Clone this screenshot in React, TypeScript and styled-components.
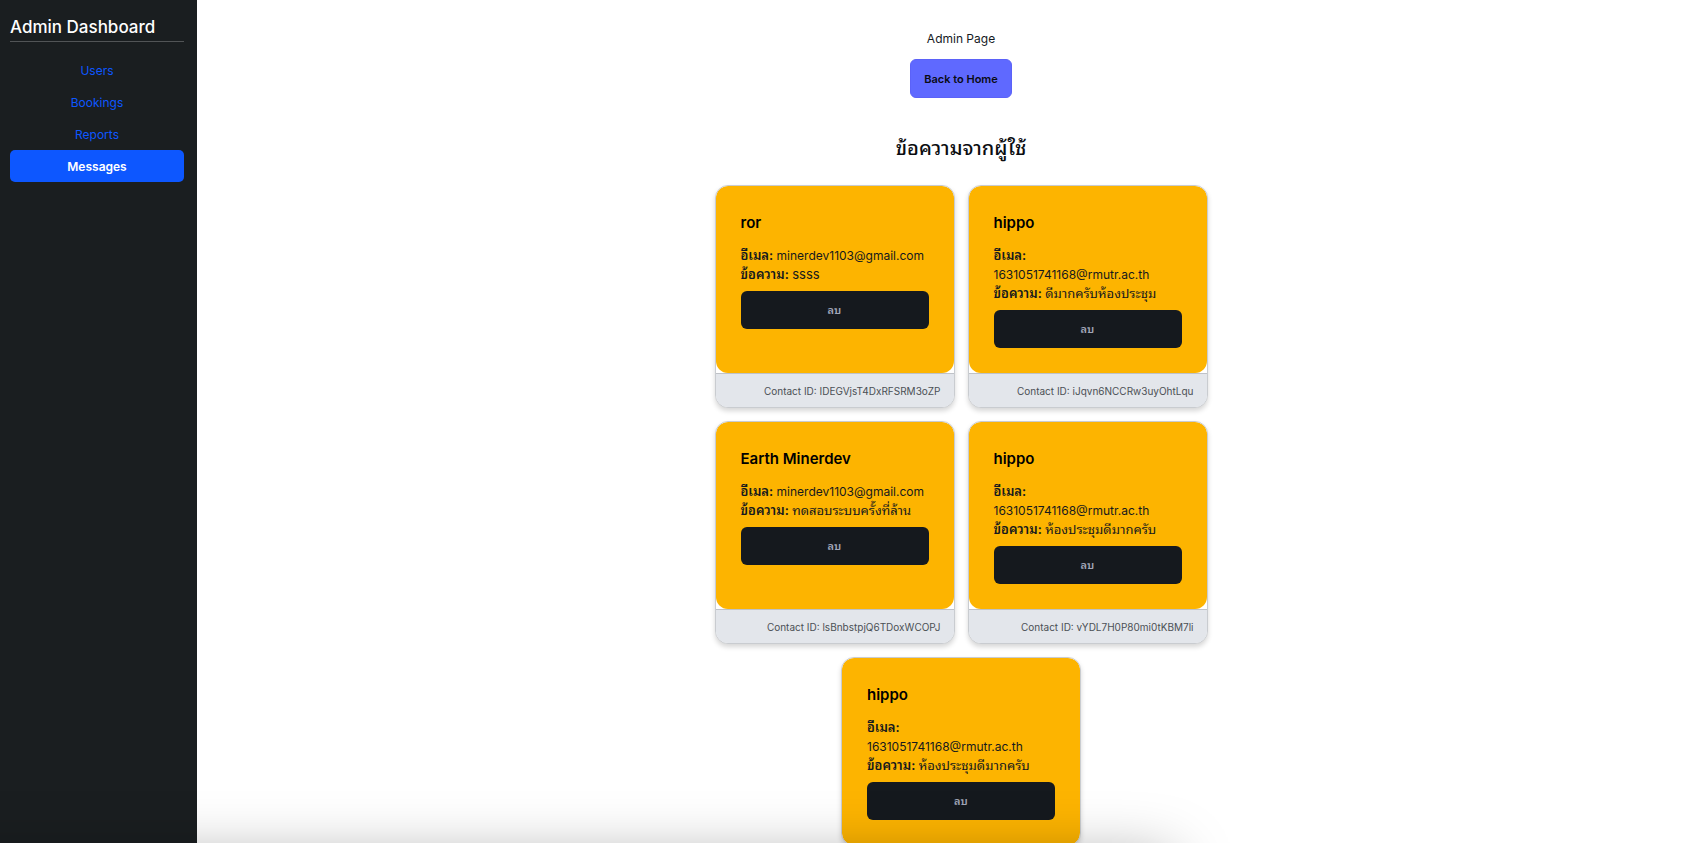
import React from 'react';
import styled, { createGlobalStyle } from 'styled-components';

const thai = '"Noto Sans Thai Looped", Loma, Waree, Umpush, "Noto Serif Thai", "Noto Sans Thai"';

const GlobalStyle = createGlobalStyle`
  * { box-sizing: border-box; }
  body {
    margin: 0;
    background: #fff;
    color: #15191e;
    font-family: Inter, ${thai}, sans-serif;
    font-size: 12px;
    line-height: 19px;
  }
  h1, h2, h3, p { margin: 0; }
`;

const Layout = styled.div`
  display: flex;
  height: 100vh;
  overflow: hidden;
`;

const Sidebar = styled.aside`
  flex: 0 0 197px;
  padding: 13px 13px 13px 10px;
  background: #1a1e20;
`;

const Brand = styled.h1`
  border-bottom: 1px solid #515456;
  color: #fff;
  font-size: 17px;
  font-weight: 500;
  line-height: 28px;
  white-space: nowrap;
`;

const Nav = styled.nav`
  display: flex;
  flex-direction: column;
  margin-top: 12px;
`;

const NavLink = styled.a<{ $active?: boolean }>`
  height: 32px;
  border-radius: 5px;
  background: ${(p) => (p.$active ? '#0d57ff' : 'transparent')};
  color: ${(p) => (p.$active ? '#fff' : '#0d57ff')};
  font-weight: ${(p) => (p.$active ? 600 : 400)};
  line-height: 33px;
  text-align: center;
  text-decoration: none;
`;

const Main = styled.main`
  flex: 1;
  display: flex;
  flex-direction: column;
  align-items: center;
  padding: 29px 0 0 26px;
  overflow-y: auto;
  scrollbar-width: none;
`;

const HomeButton = styled.button`
  flex-shrink: 0;
  height: 39px;
  margin-top: 11px;
  padding: 0 13px;
  border: 1px solid #5b62f8;
  border-radius: 6px;
  background: #5f69ff;
  color: #0a0b14;
  font: 600 11px/16px Inter, sans-serif;
`;

const Heading = styled.h2`
  margin: 37px 0 23px;
  font-size: 20px;
  font-weight: 500;
  line-height: 27px;
  color: #0b0d10;
`;

const CardList = styled.section`
  display: flex;
  flex-wrap: wrap;
  justify-content: center;
  gap: 13px;
  width: 100%;
  max-width: 512px;
`;

const Card = styled.article`
  display: flex;
  flex-direction: column;
  width: 240px;
  border: 1px solid #c9ccd0;
  border-radius: 13px;
  background: #fff;
  box-shadow: 0 3px 5px rgba(0, 0, 0, 0.16);
  overflow: hidden;
`;

const CardBody = styled.div`
  flex: 1;
  padding: 25px;
  border-radius: 12px;
  background: #fdb400;
`;

const Name = styled.h3`
  margin-bottom: 12px;
  color: #000;
  font-size: 15px;
  font-weight: 600;
  line-height: 23px;
`;

const Line = styled.p`
  overflow-wrap: break-word;
`;

const Label = styled.strong`
  font-size: 13px;
  font-weight: 600;
`;

const MessageText = styled.span`
  font-size: 13px;
`;

const DeleteButton = styled.button`
  display: block;
  width: 100%;
  height: 38px;
  margin-top: 7px;
  border: 0;
  border-radius: 6px;
  background: #15191e;
  color: #a1a6b8;
  font: 600 11px/16px Inter, ${thai}, sans-serif;
`;

const CardFooter = styled.footer`
  padding: 2px 13px 0;
  border-top: 1px solid #bfc2c7;
  background: #e3e6eb;
  color: #4b5055;
  font-size: 10px;
  line-height: 31px;
  text-align: right;
`;

const BottomShade = styled.div`
  position: fixed;
  top: 100%;
  left: -5%;
  width: 74%;
  height: 60px;
  margin-top: 14px;
  box-shadow: 0 0 60px rgba(0, 0, 0, 0.34);
  pointer-events: none;
`;

interface Message {
  name: string;
  email: string;
  text: string;
  id?: string;
}

const messages: Message[] = [
  { name: 'ror', email: 'minerdev1103@gmail.com', text: 'ssss', id: 'IDEGVjsT4DxRFSRM3oZP' },
  { name: 'hippo', email: '1631051741168@rmutr.ac.th', text: 'ดีมากครับห้องประชุม', id: 'iJqvn6NCCRw3uyOhtLqu' },
  { name: 'Earth Minerdev', email: 'minerdev1103@gmail.com', text: 'ทดสอบระบบครั้งที่ล้าน', id: 'lsBnbstpjQ6TDoxWCOPJ' },
  { name: 'hippo', email: '1631051741168@rmutr.ac.th', text: 'ห้องประชุมดีมากครับ', id: 'vYDL7H0P80mi0tKBM7li' },
  { name: 'hippo', email: '1631051741168@rmutr.ac.th', text: 'ห้องประชุมดีมากครับ' },
];

const pages = ['Users', 'Bookings', 'Reports', 'Messages'];

const MessageCard = ({ name, email, text, id }: Message) => (
  <Card>
    <CardBody>
      <Name>{name}</Name>
      <Line><Label>อีเมล:</Label> {email}</Line>
      <Line><Label>ข้อความ:</Label> <MessageText>{text}</MessageText></Line>
      <DeleteButton type="button">ลบ</DeleteButton>
    </CardBody>
    {id && <CardFooter>Contact ID: {id}</CardFooter>}
  </Card>
);

export default function App() {
  return (
    <>
      <GlobalStyle />
      <Layout>
        <Sidebar>
          <Brand>Admin Dashboard</Brand>
          <Nav>
            {pages.map((page) => (
              <NavLink key={page} href={`#${page.toLowerCase()}`} $active={page === 'Messages'}>
                {page}
              </NavLink>
            ))}
          </Nav>
        </Sidebar>
        <Main>
          <p>Admin Page</p>
          <HomeButton type="button">Back to Home</HomeButton>
          <Heading>ข้อความจากผู้ใช้</Heading>
          <CardList>
            {messages.map((message, index) => (
              <MessageCard key={index} {...message} />
            ))}
          </CardList>
        </Main>
      </Layout>
      <BottomShade />
    </>
  );
}
